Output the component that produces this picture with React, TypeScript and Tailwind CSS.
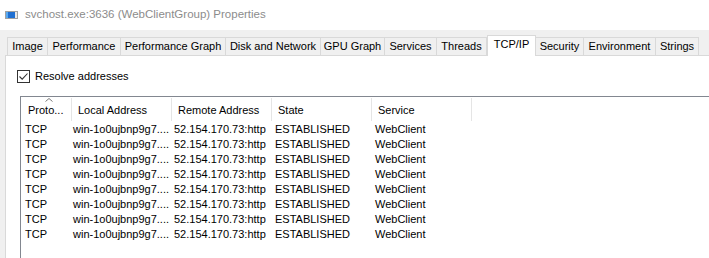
import React from "react";

const tabs: { label: string; w: string; selected?: boolean }[] = [
  { label: "Image", w: "w-[41px]" },
  { label: "Performance", w: "w-[73px]" },
  { label: "Performance Graph", w: "w-[105px]" },
  { label: "Disk and Network", w: "w-[95px]" },
  { label: "GPU Graph", w: "w-[64px]" },
  { label: "Services", w: "w-[52px]" },
  { label: "Threads", w: "w-[50px]" },
  { label: "TCP/IP", w: "w-[49px]", selected: true },
  { label: "Security", w: "w-[48px]" },
  { label: "Environment", w: "w-[72px]" },
  { label: "Strings", w: "w-[43px]" },
];

const rows = Array.from({ length: 8 });

export default function App() {
  return (
    <div
      className="w-[709px] h-[258px] overflow-hidden bg-[#f0f0f0] flex flex-col text-[11px] text-black"
      style={{ fontFamily: '"Liberation Sans", Arial, sans-serif' }}
    >
      {/* Title bar */}
      <div className="h-[30px] bg-white flex items-center pl-[5px] shrink-0">
        <svg width="13" height="8" viewBox="0 0 13 8" className="shrink-0">
          <rect x="0.5" y="0.5" width="12" height="7" fill="#e8e8e8" stroke="#a0a0a0" />
          <rect x="3" y="1" width="7" height="6" fill="#1f6fd1" />
          <rect x="1" y="1" width="2" height="6" fill="#5aa9ef" />
        </svg>
        <span className="ml-[7px] text-[11.5px] text-[#8c8c8c] leading-none">
          svchost.exe:3636 (WebClientGroup) Properties
        </span>
      </div>

      {/* Tabs */}
      <div className="flex items-end pl-[7px] pt-[5px] h-[25px] shrink-0 relative z-10">
        {tabs.map((t) =>
          t.selected ? (
            <div
              key={t.label}
              className={`${t.w} h-[21px] bg-white border border-b-0 border-[#d9d9d9] flex items-start justify-center pt-[3px] -mb-px leading-none`}
            >
              {t.label}
            </div>
          ) : (
            <div
              key={t.label}
              className={`${t.w} h-[18px] border-t border-r border-[#d9d9d9] first:border-l flex items-center justify-center leading-none`}
            >
              {t.label}
            </div>
          )
        )}
      </div>

      {/* Panel */}
      <div className="flex-1 ml-[5px] bg-white border-l border-t border-[#d9d9d9] flex flex-col">
        <div className="flex items-center pl-[11px] mt-[14px] h-[13px]">
          <div className="w-[13px] h-[13px] border border-[#333333] bg-white flex items-center justify-center">
            <svg width="11" height="11" viewBox="0 0 11 11">
              <path d="M1.5 5.5 L4.2 8.2 L9.5 2.5" fill="none" stroke="#333333" strokeWidth="1.1" />
            </svg>
          </div>
          <span className="ml-[5px] leading-none">Resolve addresses</span>
        </div>

        {/* List view */}
        <div className="ml-[14px] mt-[13px] flex-1 border-l border-t border-[#828790] bg-white">
          <div className="flex h-[25px] relative">
            <svg width="8" height="4" viewBox="0 0 8 4" className="absolute left-[24px] top-[1px]">
              <path d="M0.5 3.5 L4 0.5 L7.5 3.5" fill="none" stroke="#7a7a7a" strokeWidth="1" />
            </svg>
            <div className="w-[50px] pl-[7px] flex items-center pt-[2px]">Proto...</div>
            <div className="w-[100px] pl-[6px] flex items-center pt-[2px] border-l border-[#e5e5e5] my-[1px]">Local Address</div>
            <div className="w-[100px] pl-[6px] flex items-center pt-[2px] border-l border-[#e5e5e5] my-[1px]">Remote Address</div>
            <div className="w-[100px] pl-[6px] flex items-center pt-[2px] border-l border-[#e5e5e5] my-[1px]">State</div>
            <div className="w-[100px] pl-[6px] flex items-center pt-[2px] border-l border-[#e5e5e5] my-[1px]">Service</div>
            <div className="border-l border-[#e5e5e5] my-[1px]" />
          </div>
          {rows.map((_, i) => (
            <div key={i} className="flex h-[15px] items-center leading-none whitespace-nowrap">
              <div className="w-[50px] pl-[4px]">TCP</div>
              <div className="w-[101px] pl-[2px]">win-1o0ujbnp9g7....</div>
              <div className="w-[100px] pl-[2px]">52.154.170.73:http</div>
              <div className="w-[100px] pl-[3px]">ESTABLISHED</div>
              <div className="w-[100px] pl-[3px]">WebClient</div>
            </div>
          ))}
        </div>
      </div>
    </div>
  );
}
